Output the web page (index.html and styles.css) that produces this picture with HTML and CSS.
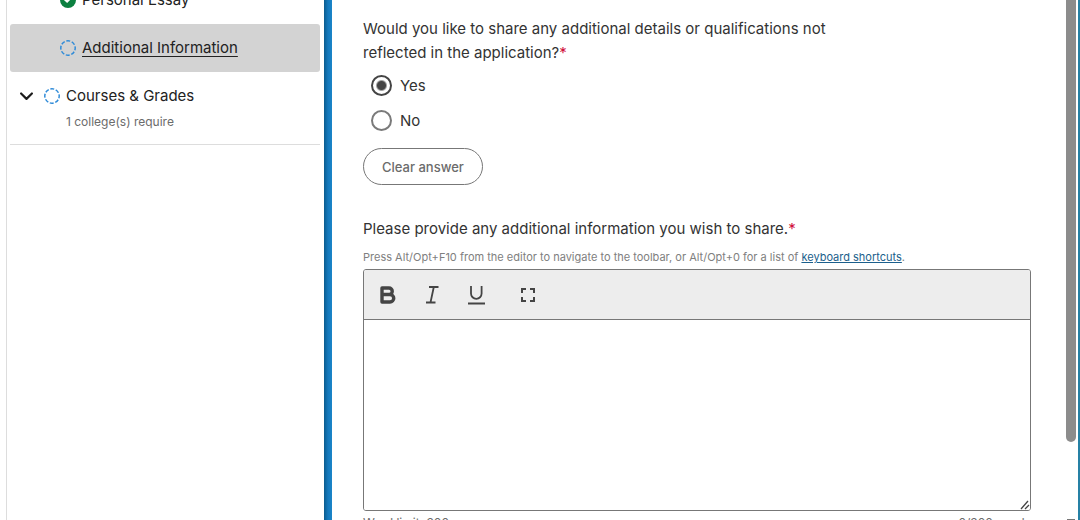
FILE: index.html
```
<!DOCTYPE html>
<html lang="en">
  <head>
    <meta charset="UTF-8" />
    <meta name="viewport" content="width=device-width, initial-scale=1" />
    <title>Additional Information</title>
    <link rel="stylesheet" href="styles.css">
  </head>

  <body>
    <div class="page">
      <nav class="sidebar">
        <ul class="navList">
          <li class="navItem">
            <svg class="statusIcon" viewBox="0 0 16 16">
              <circle cx="8" cy="8" r="8" fill="#0c8040" />
              <path d="M4.5 7.2l2.6 2.4 4.4-4.4" fill="none" stroke="#fff" stroke-width="2" />
            </svg>
            <a href="#essay">Personal Essay</a>
          </li>
          <li class="navItem active">
            <svg class="statusIcon" viewBox="0 0 16 16">
              <circle class="dashed" cx="8" cy="8" r="7.2" pathLength="80" />
            </svg>
            <a href="#additional">Additional Information</a>
          </li>
        </ul>
        <div class="section">
          <button class="sectionTitle" type="button" aria-expanded="false">
            <svg class="chevron" viewBox="0 0 12 8">
              <path d="M1 1.2l5 5 5-5" fill="none" stroke="#1c1c1c" stroke-width="2" stroke-linecap="round" stroke-linejoin="round" />
            </svg>
            <svg class="statusIcon" viewBox="0 0 16 16">
              <circle class="dashed" cx="8" cy="8" r="7.2" pathLength="80" />
            </svg>
            <span>Courses &amp; Grades</span>
          </button>
          <div class="sectionNote">1 college(s) require</div>
        </div>
      </nav>
      <div class="divider"></div>

      <main class="content">
        <form>
          <fieldset class="question">
            <legend class="label">Would you like to share any additional details or qualifications not reflected in the application?<span class="required">*</span></legend>
            <label class="option"><input type="radio" name="share" value="yes" checked />Yes</label>
            <label class="option"><input type="radio" name="share" value="no" />No</label>
          </fieldset>
          <button class="clear" type="button">Clear answer</button>

          <label class="label" for="details">Please provide any additional information you wish to share.<span class="required">*</span></label>
          <p class="hint">Press Alt/Opt+F10 from the editor to navigate to the toolbar, or Alt/Opt+0 for a list of <a href="#shortcuts">keyboard shortcuts</a>.</p>
          <div class="editor">
            <div class="toolbar">
              <button type="button" aria-label="Bold">
                <svg viewBox="0 0 22 22"><path d="M5 4h7a3.2 3.2 0 0 1 0 6.5H5zM5 10.500h8a3.600 3.600 0 0 1 0 7.500H5z" stroke-width="3.400" stroke-linejoin="round" /></svg>
              </button>
              <button type="button" aria-label="Italic">
                <svg viewBox="0 0 22 22"><path d="M8 3h9.5M5 18.5h9.5M12.8 3L9.5 18.5" stroke-width="1.8" /></svg>
              </button>
              <button type="button" aria-label="Underline">
                <svg viewBox="0 0 22 22"><path d="M6 2v7.5a5.3 5.3 0 0 0 10.6 0V2M3 19.5h17" stroke-width="1.8" /></svg>
              </button>
              <button class="fullscreen" type="button" aria-label="Fullscreen">
                <svg viewBox="0 0 22 22"><path d="M9 5H5v4M13 5h4v4M9 17H5v-4M13 17h4v-4" stroke-width="2" /></svg>
              </button>
            </div>
            <textarea id="details"></textarea>
            <svg class="grip" viewBox="0 0 10 10"><path d="M1 9L8 1M5 9l4-4" fill="none" stroke="#444" stroke-width="1.3" /></svg>
          </div>
          <div class="counter">
            <span>Word limit: 300</span>
            <span>0/300 words</span>
          </div>
        </form>
      </main>

      <div class="scrollbar">
        <div class="thumb"></div>
        <div class="arrow"></div>
      </div>
    </div>
  </body>
</html>
```
FILE: styles.css
```
* {
  box-sizing: border-box;
}

body {
  margin: 0;
  font-family: Inter, "Liberation Sans", sans-serif;
  font-size: 15px;
  line-height: 24px;
  color: #333333;
  background: #ffffff;
}

button {
  font: inherit;
  color: inherit;
  padding: 0;
  border: 0;
  background: none;
  cursor: pointer;
}

.page {
  display: flex;
  height: 100vh;
  overflow: hidden;
  border-right: 2px solid #2681a5;
}

/* sidebar */
.sidebar {
  flex: 0 0 30%;
  margin-left: 6px;
  padding: 0 4px 0 3px;
  max-width: 318px;
  border-left: 1px solid #dddddd;
  color: #222222;
}

.navList {
  list-style: none;
  margin: -24px 0 0;
  padding: 0;
}

.navItem {
  display: flex;
  align-items: center;
  gap: 6px;
  height: 48px;
  padding-left: 50px;
  border-radius: 3px;
}

.navItem a {
  color: inherit;
  text-decoration: none;
}

.active {
  background: #d3d3d3;
}

.active a {
  text-decoration: underline;
  text-underline-offset: 3px;
}

.statusIcon {
  width: 16px;
  height: 16px;
}

.dashed {
  fill: none;
  stroke: #2f8bd8;
  stroke-width: 1.5;
  stroke-dasharray: 7 3;
  stroke-dashoffset: 3;
}

.section {
  padding: 12px 0 10px 10px;
  border-bottom: 1px solid #dddddd;
}

.sectionTitle {
  display: flex;
  align-items: center;
  gap: 6px;
}

.chevron {
  width: 13px;
  height: 9px;
  margin-right: 5px;
}

.sectionNote {
  padding: 2px 0 0 46px;
  font-size: 12px;
  color: #6b6b6b;
}

.divider {
  flex: 0 0 8px;
  background: linear-gradient(to right, #0b5c8e, #1479bd 50%, #1b85c8);
}

/* form */
.content {
  flex: 1;
  min-width: 0;
  padding: 17px 35px 0 31px;
}

.question {
  margin: 0;
  padding: 0;
  border: 0;
}

.label {
  display: block;
  max-width: 480px;
  padding: 0;
}

.required {
  color: #d0103a;
}

.question .label {
  margin-bottom: 3px;
}

.option {
  display: flex;
  align-items: center;
  gap: 8px;
  height: 35px;
  padding-left: 8px;
}

.option input {
  appearance: none;
  width: 21px;
  height: 21px;
  margin: 0;
  border: 2px solid #7a7a7a;
  border-radius: 50%;
}

.option input:checked {
  border-color: #444444;
  background: radial-gradient(circle, #444444 4px, #ffffff 6px);
}

.clear {
  display: block;
  height: 37px;
  margin: 10px 0 32px;
  padding: 0 18px;
  border: 1px solid #777777;
  border-radius: 19px;
  font-size: 13px;
  font-weight: 500;
  color: #6b6b6b;
}

.hint {
  margin: 8px 0 4px;
  font-size: 11px;
  line-height: 16px;
  color: #808080;
}

.hint a {
  color: #1b5f8c;
}

.editor {
  position: relative;
  border: 1px solid #777777;
  border-radius: 3px;
  overflow: hidden;
}

.toolbar {
  display: flex;
  height: 50px;
  padding-left: 2px;
  border-bottom: 1px solid #777777;
  background: #ededed;
}

.toolbar button {
  width: 44px;
}

.toolbar .fullscreen {
  margin-left: 8px;
}

.toolbar svg {
  display: block;
  width: 22px;
  height: 22px;
  margin: 0 auto;
  fill: none;
  stroke: #444444;
}

.editor textarea {
  display: block;
  width: 100%;
  height: 190px;
  padding: 12px;
  border: 0;
  font: inherit;
  resize: none;
  outline: none;
}

.grip {
  position: absolute;
  right: 0;
  bottom: 0;
  width: 10px;
  height: 10px;
}

.counter {
  display: flex;
  justify-content: space-between;
  margin-top: 4px;
  font-size: 12px;
  line-height: 16px;
  color: #6b6b6b;
}

/* scrollbar */
.scrollbar {
  display: flex;
  flex-direction: column;
  justify-content: space-between;
  align-items: center;
  width: 10px;
  margin-right: 2px;
}

.thumb {
  width: 10px;
  height: 85%;
  border-radius: 0 0 5px 5px;
  background: #8c8c8c;
}

.arrow {
  width: 8px;
  height: 1px;
  background: #777777;
}
```
